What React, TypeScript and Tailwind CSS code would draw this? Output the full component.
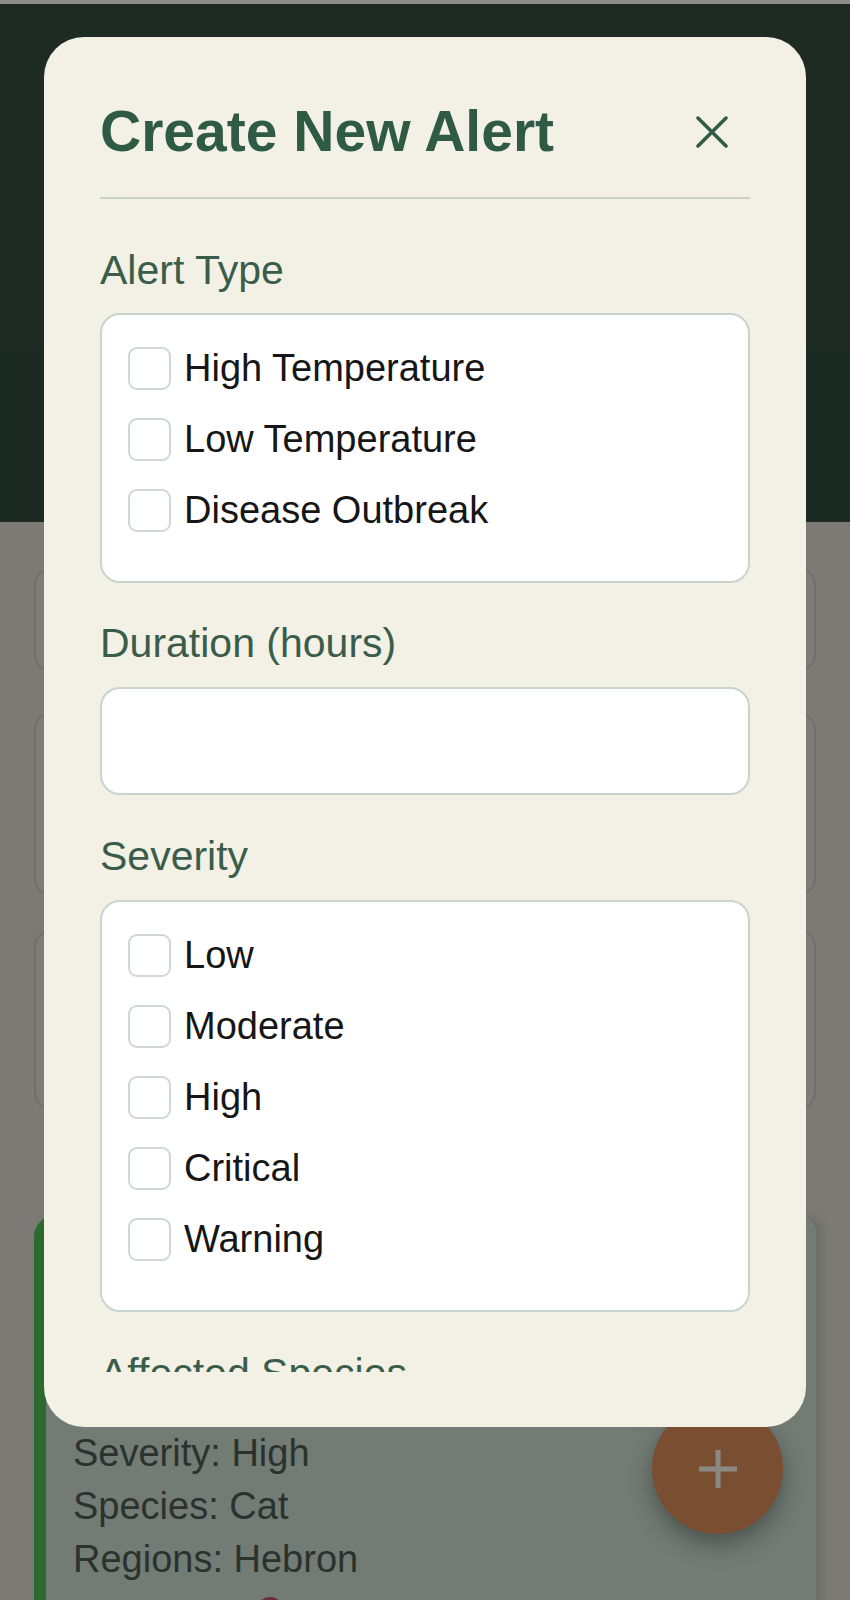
import React from "react";

const alertTypes = ["High Temperature", "Low Temperature", "Disease Outbreak"];
const severities = ["Low", "Moderate", "High", "Critical", "Warning"];

const font = { fontFamily: '"Liberation Sans", Arial, sans-serif' };

const CheckList = ({ items }: { items: string[] }) => (
  <div className="flex flex-col gap-[28px] rounded-[20px] border-2 border-[#c9d4cd] bg-white pl-[26px] pt-[32px] pb-[49px]">
    {items.map((item) => (
      <label key={item} className="flex items-center gap-[13px]">
        <span className="block h-[43px] w-[43px] shrink-0 rounded-[9px] border-2 border-[#cfd8d3] bg-white"></span>
        <span className="text-[38px] leading-none text-[#161616]">{item}</span>
      </label>
    ))}
  </div>
);

const App = () => {
  return (
    <div
      className="relative h-[1600px] w-[850px] overflow-hidden bg-[#7b7a75]"
      style={font}
    >
      {/* dimmed page behind the modal */}
      <div className="h-[4px] bg-[#8c8c8c]"></div>
      <div className="h-[344px] bg-[#1d2b23]"></div>
      <div className="h-[174px] bg-[#1b2a22]"></div>

      <div className="flex flex-col px-[34px] pt-[45px]">
        <div className="h-[105px] rounded-[18px] border-2 border-[#6f706b] bg-[#7d7c77]"></div>
        <div className="mt-[40px] h-[184px] rounded-[18px] border-2 border-[#6f706b] bg-[#7d7c77]"></div>
        <div className="mt-[33px] h-[181px] rounded-[18px] border-2 border-[#6f706b] bg-[#7d7c77]"></div>
        <div className="mt-[105px] h-[400px] rounded-tl-[22px] rounded-tr-[18px] border-l-[12px] border-[#2d6a2f] bg-[#727c75] pl-[27px] pt-[212px] text-[38px] leading-[53px] text-[#2b322d] shadow-[6px_0_10px_rgba(0,0,0,0.12)]">
          <div>Severity: High</div>
          <div>Species: Cat</div>
          <div>Regions: Hebron</div>
          <div className="mt-[11px] ml-[183px] h-[28px] w-[28px] rounded-full bg-[#6e2b32]"></div>
        </div>
      </div>

      {/* floating add button */}
      <div className="absolute left-[652px] top-[1403px] flex h-[131px] w-[131px] items-center justify-center rounded-full bg-[#7a4e31] shadow-[0_10px_24px_rgba(0,0,0,0.35)]">
        <svg width="42" height="42" viewBox="0 0 42 42">
          <path d="M21 2v38M2 21h38" stroke="#8b8a82" strokeWidth="5" />
        </svg>
      </div>

      {/* modal */}
      <div className="absolute left-[44px] top-[37px] flex h-[1390px] w-[762px] flex-col rounded-[40px] bg-[#f3f1e6] pt-[62px] pb-[55px]">
        <div className="flex-1 overflow-hidden px-[56px]">
          <div className="flex items-center justify-between border-b-2 border-[#c9d3c6] pb-[32px]">
            <h2 className="text-[57px] font-bold leading-[1.15] text-[#2f5a45]">
              Create New Alert
            </h2>
            <svg width="32" height="32" viewBox="0 0 32 32" className="mr-[22px]">
              <path d="M2 2L30 30M30 2L2 30" stroke="#2f5a45" strokeWidth="3.5" strokeLinecap="round" />
            </svg>
          </div>

          <div className="mt-[51px] text-[41px] leading-none text-[#3a5d4b]">Alert Type</div>
          <div className="mt-[22px]">
            <CheckList items={alertTypes} />
          </div>

          <div className="mt-[40px] text-[41px] leading-none text-[#3a5d4b]">Duration (hours)</div>
          <input
            type="text"
            className="mt-[23px] block h-[108px] w-full rounded-[20px] border-2 border-[#c9d4cd] bg-white px-[20px] text-[38px] outline-none"
          />

          <div className="mt-[41px] text-[41px] leading-none text-[#3a5d4b]">Severity</div>
          <div className="mt-[23px]">
            <CheckList items={severities} />
          </div>

          <div className="mt-[41px] text-[41px] leading-none text-[#3a5d4b]">Affected Species</div>
        </div>
      </div>
    </div>
  );
};

export default App;
